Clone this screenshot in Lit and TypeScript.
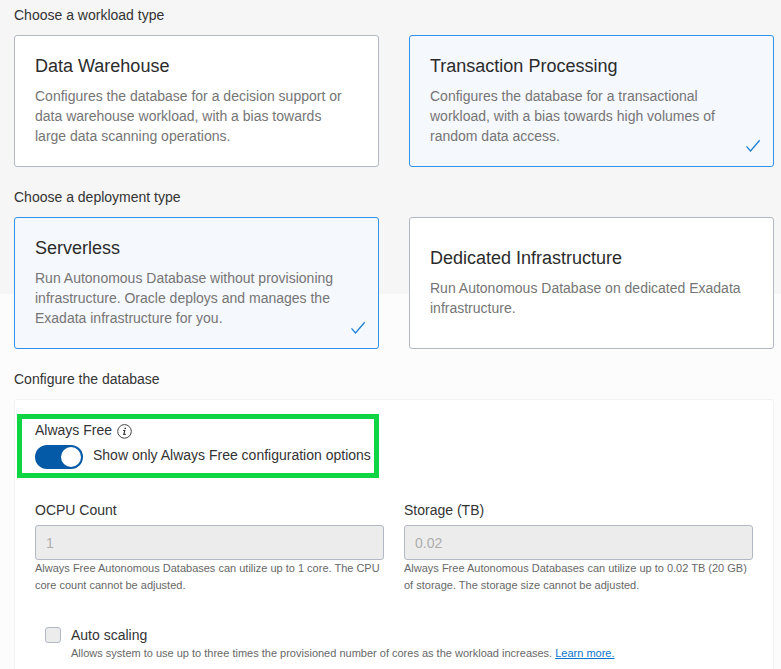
import { LitElement, html, css, nothing } from "lit";
import { customElement, property } from "lit/decorators.js";

@customElement("option-card")
class OptionCard extends LitElement {
  @property() heading = "";
  @property({ attribute: false }) lines: string[] = [];
  @property({ type: Boolean }) selected = false;

  static styles = css`
    :host { display: block; height: 132px; }
    .card {
      position: relative; box-sizing: border-box; height: 100%;
      display: flex; flex-direction: column; justify-content: center;
      padding: 0 20px 2px; background: #fff;
      border: 1px solid #b2b8c4; border-radius: 3px;
    }
    .card.selected { background: #f5f8fd; border-color: #3192ea; }
    .heading { font-size: 18px; line-height: 24px; color: #2b2b2b; margin-bottom: 8px; }
    .line { font-size: 14px; line-height: 20px; color: #757575; white-space: nowrap; }
    .check { position: absolute; right: 12px; bottom: 13px; width: 16px; height: 14px; }
  `;

  render() {
    return html`<div class="card ${this.selected ? "selected" : ""}">
      <div class="heading">${this.heading}</div>
      ${this.lines.map((l) => html`<div class="line">${l}</div>`)}
      ${this.selected
        ? html`<svg class="check" viewBox="0 0 16 14"><path d="M1.5 7.4 L5.5 11.9 L14.7 1.3" fill="none" stroke="#1a7fd6" stroke-width="1.3" /></svg>`
        : nothing}
    </div>`;
  }
}

@customElement("disabled-field")
class DisabledField extends LitElement {
  @property() label = "";
  @property() value = "";
  @property({ attribute: false }) hint: string[] = [];

  static styles = css`
    :host { display: block; }
    .label { font-size: 14px; line-height: 20px; color: #333; }
    .box {
      box-sizing: border-box; height: 35px; margin-top: 5px; padding: 0 10px;
      border: 1px solid #b2b8c4; border-radius: 3px; background: #ececec;
      font-size: 14px; line-height: 34px; color: #adadad;
    }
    .hint { font-size: 11px; line-height: 17px; color: #686868; white-space: nowrap; }
  `;

  render() {
    return html`<div class="label">${this.label}</div>
      <div class="box">${this.value}</div>
      ${this.hint.map((l) => html`<div class="hint">${l}</div>`)}`;
  }
}

@customElement("app-root")
class AppRoot extends LitElement {
  static styles = css`
    :host {
      display: block; box-sizing: border-box; height: 669px; overflow: hidden;
      padding: 5px 7px 0 14px;
      background: linear-gradient(#f6f6f6 294px, #fcfcfc 294px);
      font-family: "Liberation Sans", Arial, sans-serif;
    }
    .title { font-size: 14px; line-height: 20px; color: #333; margin-bottom: 10px; }
    .cards { display: grid; grid-template-columns: 365px 365px; gap: 30px; margin-bottom: 20px; }
    .panel {
      box-sizing: border-box; height: 290px; border: 1px solid #f2f2f2; border-radius: 3px 3px 0 0;
      background: #fff; padding: 14px 0 0 2px;
    }
    .highlight {
      box-sizing: border-box; width: 362px; height: 64px; border: 5px solid #0fd444;
      padding: 1px 0 0 13px; font-size: 14px; line-height: 20px; color: #333;
    }
    .free { display: flex; align-items: center; gap: 5px; }
    .info { width: 16px; height: 16px; margin-top: 3px; margin-bottom: -1px; }
    .toggle-row { display: flex; gap: 10px; margin-top: 5px; white-space: nowrap; }
    .toggle {
      box-sizing: border-box; width: 48px; height: 24px; border-radius: 12px; background: #045aa6;
      display: flex; justify-content: flex-end; padding: 2px; flex: none;
    }
    .knob { width: 20px; height: 20px; border-radius: 50%; background: #fff; }
    .fields { display: grid; grid-template-columns: 349px 349px; gap: 20px; margin: 22px 0 0 18px; }
    .scaling { display: flex; gap: 10px; margin: 31px 0 0 28px; }
    .checkbox {
      box-sizing: border-box; width: 16px; height: 16px; margin-top: 2px; flex: none;
      border: 1px solid #b2b8c4; border-radius: 3px; background: #ececec;
    }
    .name { font-size: 14px; line-height: 20px; color: #333; }
    .note { font-size: 11px; line-height: 16px; color: #686868; white-space: nowrap; }
    .link { color: #0b74cf; text-decoration: underline; }
  `;

  render() {
    return html`
      <div class="title">Choose a workload type</div>
      <div class="cards">
        <option-card heading="Data Warehouse" .lines=${["Configures the database for a decision support or", "data warehouse workload, with a bias towards", "large data scanning operations."]}></option-card>
        <option-card selected heading="Transaction Processing" .lines=${["Configures the database for a transactional", "workload, with a bias towards high volumes of", "random data access."]}></option-card>
      </div>
      <div class="title">Choose a deployment type</div>
      <div class="cards">
        <option-card selected heading="Serverless" .lines=${["Run Autonomous Database without provisioning", "infrastructure. Oracle deploys and manages the", "Exadata infrastructure for you."]}></option-card>
        <option-card heading="Dedicated Infrastructure" .lines=${["Run Autonomous Database on dedicated Exadata", "infrastructure."]}></option-card>
      </div>
      <div class="title">Configure the database</div>
      <div class="panel">
        <div class="highlight">
          <div class="free">
            <span>Always Free</span>
            <svg class="info" viewBox="0.5 0.6 16 16" fill="none" stroke="#444">
              <circle cx="8" cy="8" r="6.8" stroke-width="1" />
              <circle cx="8.7" cy="4.9" r="0.85" fill="#333" stroke="none" />
              <path d="M6.6 7.1 H8.3 L7.3 11 H9.2" stroke="#333" stroke-width="1.1" />
            </svg>
          </div>
          <div class="toggle-row">
            <div class="toggle"><div class="knob"></div></div>
            <span>Show only Always Free configuration options</span>
          </div>
        </div>
        <div class="fields">
          <disabled-field label="OCPU Count" value="1" .hint=${["Always Free Autonomous Databases can utilize up to 1 core. The CPU", "core count cannot be adjusted."]}></disabled-field>
          <disabled-field label="Storage (TB)" value="0.02" .hint=${["Always Free Autonomous Databases can utilize up to 0.02 TB (20 GB)", "of storage. The storage size cannot be adjusted."]}></disabled-field>
        </div>
        <div class="scaling">
          <div class="checkbox"></div>
          <div>
            <div class="name">Auto scaling</div>
            <div class="note">Allows system to use up to three times the provisioned number of cores as the workload increases. <a class="link">Learn more.</a></div>
          </div>
        </div>
      </div>
    `;
  }
}
